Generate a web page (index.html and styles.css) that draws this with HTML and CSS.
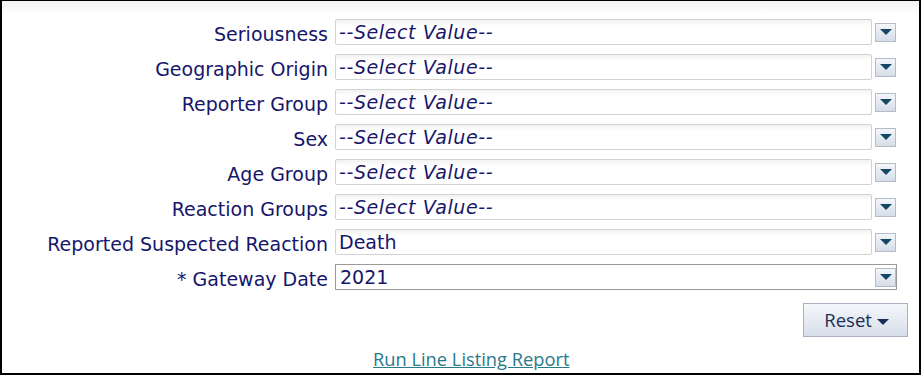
FILE: index.html
```
<!DOCTYPE html>
<html lang="en">

<head>
    <meta charset="UTF-8">
    <meta name="viewport" content="width=device-width, initial-scale=1.0">
    <title>Line Listing</title>
    <link rel="stylesheet" href="styles.css">
</head>

<body>
    <div class="panel">
        <div class="filters">
            <div class="row">
                <label class="lbl">Seriousness</label>
                <div class="combo">
                    <span class="val empty">--Select Value--</span>
                    <span class="arr"><i></i></span>
                </div>
            </div>
            <div class="row">
                <label class="lbl">Geographic Origin</label>
                <div class="combo">
                    <span class="val empty">--Select Value--</span>
                    <span class="arr"><i></i></span>
                </div>
            </div>
            <div class="row">
                <label class="lbl">Reporter Group</label>
                <div class="combo">
                    <span class="val empty">--Select Value--</span>
                    <span class="arr"><i></i></span>
                </div>
            </div>
            <div class="row">
                <label class="lbl">Sex</label>
                <div class="combo">
                    <span class="val empty">--Select Value--</span>
                    <span class="arr"><i></i></span>
                </div>
            </div>
            <div class="row">
                <label class="lbl">Age Group</label>
                <div class="combo">
                    <span class="val empty">--Select Value--</span>
                    <span class="arr"><i></i></span>
                </div>
            </div>
            <div class="row">
                <label class="lbl">Reaction Groups</label>
                <div class="combo">
                    <span class="val empty">--Select Value--</span>
                    <span class="arr"><i></i></span>
                </div>
            </div>
            <div class="row">
                <label class="lbl">Reported Suspected Reaction</label>
                <div class="combo">
                    <span class="val">Death</span>
                    <span class="arr"><i></i></span>
                </div>
            </div>
            <div class="row">
                <label class="lbl">* Gateway Date</label>
                <div class="combo boxed">
                    <span class="val">2021</span>
                    <span class="arr"><i></i></span>
                </div>
            </div>
        </div>
        <div class="actions">
            <button class="reset-button">Reset <i></i></button>
        </div>
        <div class="run">
            <a href="#">Run Line Listing Report</a>
        </div>
    </div>
</body>

</html>
```
FILE: styles.css
```
body {
    margin: 0;
    background-color: #ffffff;
    font-family: "DejaVu Sans", Verdana, sans-serif;
    color: #16166b;
}

.panel {
    box-sizing: border-box;
    width: 921px;
    height: 375px;
    border: 2px solid #000000;
    border-top-width: 1px;
    background: linear-gradient(#f3f3f3, #ffffff 14px);
    padding-top: 18px;
}

.row {
    display: flex;
    align-items: center;
    height: 26px;
    margin-bottom: 9px;
}

.lbl {
    width: 326px;
    text-align: right;
    font-size: 19px;
    padding-top: 3px;
    white-space: nowrap;
}

.combo {
    display: flex;
    align-items: center;
    margin-left: 7px;
}

.val {
    box-sizing: border-box;
    width: 537px;
    height: 26px;
    line-height: 24px;
    padding-left: 3px;
    border: 1px solid #d2d2d2;
    border-radius: 2px;
    background: linear-gradient(#f2f2f2, #ffffff 6px);
    font-size: 19px;
    white-space: nowrap;
}

.val.empty {
    font-style: italic;
    letter-spacing: 0.6px;
}

.arr {
    box-sizing: border-box;
    width: 21px;
    height: 19px;
    margin-left: 3px;
    border: 1px solid #b4bcc8;
    background: linear-gradient(#f4f7fb, #d6dde8);
    display: flex;
    align-items: center;
    justify-content: center;
}

.arr i {
    width: 0;
    height: 0;
    border-left: 6px solid transparent;
    border-right: 6px solid transparent;
    border-top: 6px solid #134764;
}

.combo.boxed {
    border: 1px solid #9a9a9a;
    height: 26px;
    box-sizing: border-box;
}

.combo.boxed .val {
    border: none;
    width: 538px;
    height: 24px;
    line-height: 24px;
    padding-left: 4px;
    background: #ffffff;
}

.combo.boxed .arr {
    margin-left: 1px;
}

.actions {
    display: flex;
    justify-content: flex-end;
    padding-right: 11px;
    margin-top: 13px;
}

.reset-button {
    box-sizing: border-box;
    width: 105px;
    height: 34px;
    border: 1px solid #a9b1bf;
    background: linear-gradient(#f5f7fb, #d7deea);
    color: #1b2e55;
    font-family: "Open Sans", "DejaVu Sans", sans-serif;
    font-size: 18.5px;
    padding: 0 0 2px 2px;
    cursor: pointer;
}

.reset-button i {
    display: inline-block;
    vertical-align: middle;
    border-left: 6px solid transparent;
    border-right: 6px solid transparent;
    border-top: 6px solid #1b2e55;
    margin-left: 0;
}

.run {
    padding-left: 371px;
    margin-top: 9px;
}

.run a {
    color: #2a7a8c;
    font-family: "Open Sans", "DejaVu Sans", sans-serif;
    font-size: 18.3px;
}
```
